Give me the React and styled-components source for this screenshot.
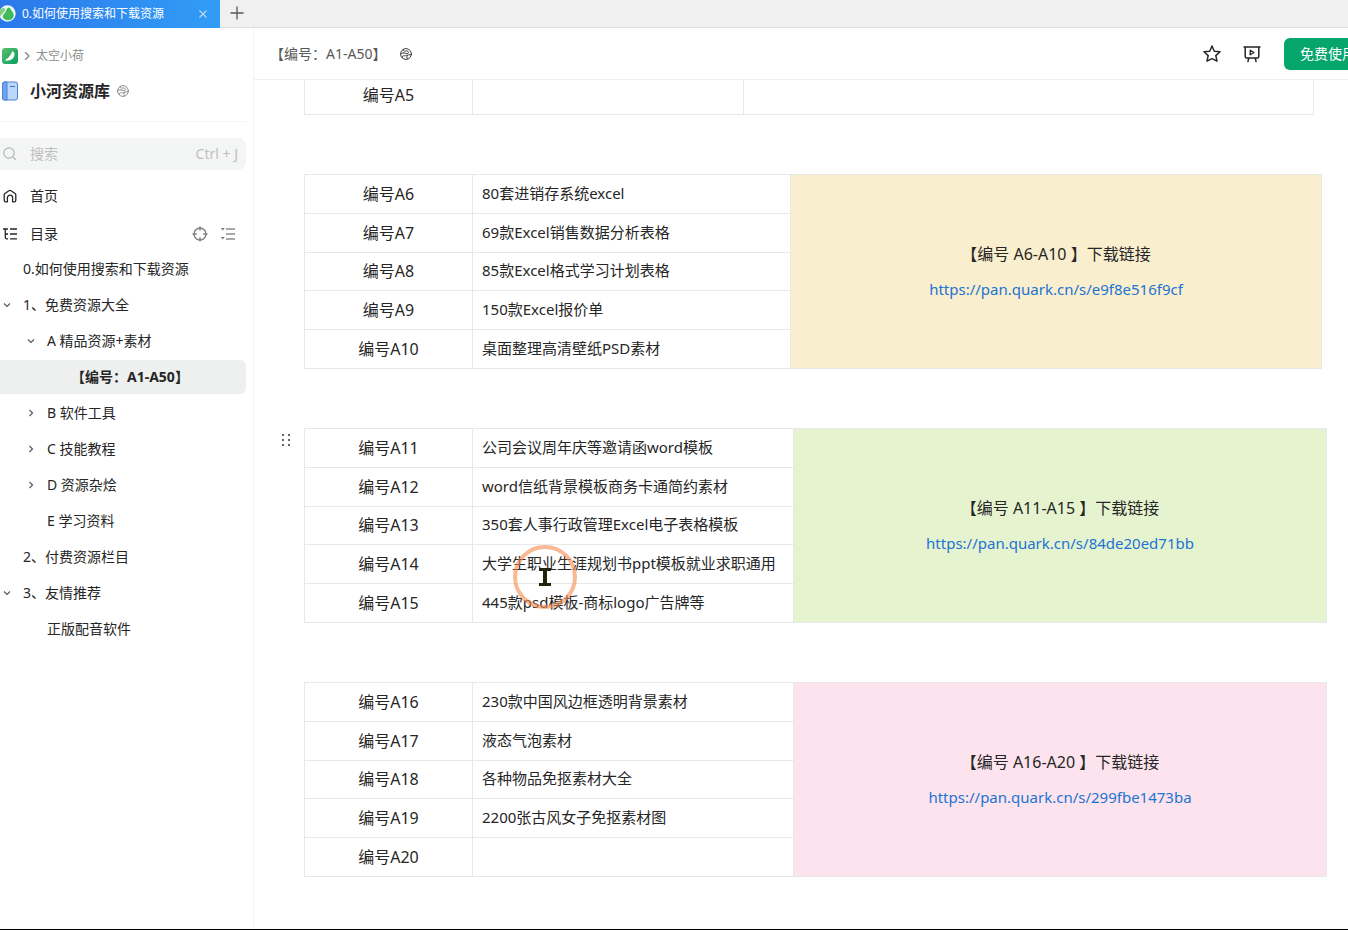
import React from "react";
import styled, { createGlobalStyle } from "styled-components";

const GlobalStyle = createGlobalStyle`
  * { box-sizing: border-box; }
  body {
    margin: 0;
    background: #fff;
    color: #262626;
    font-family: "Noto Sans", "Noto Sans CJK SC", sans-serif;
    font-size: 14px;
    line-height: 20px;
  }
  a { color: inherit; text-decoration: none; }
  ul { list-style: none; margin: 0; padding: 0; }
  button { font: inherit; color: inherit; border: 0; padding: 0; background: none; cursor: pointer; }
  svg { display: block; flex: none; }
`;

const Page = styled.div`
  display: flex;
  flex-direction: column;
  min-height: 100vh;
  overflow: hidden;
  border-bottom: 1px solid #000;
`;

const TabBar = styled.div`
  display: flex;
  height: 28px;
  background: #f0f0f0;
  border-bottom: 1px solid #e2e2e2;
`;

const BrowserTab = styled.div`
  display: flex;
  align-items: center;
  gap: 6px;
  width: 220px;
  height: 28px;
  padding-right: 12px;
  background: linear-gradient(90deg, #2b78ea, #319df6);
  color: #fff;
  font-size: 12px;
`;

const TabTitle = styled.span`
  flex: 1;
  white-space: nowrap;
`;

const NewTab = styled.button`
  display: flex;
  align-items: center;
  justify-content: center;
  width: 33px;
  height: 26px;
`;

const Body = styled.div`
  display: flex;
  flex: 1;
`;

const Sidebar = styled.aside`
  flex: none;
  width: 254px;
  padding-right: 7px;
  border-right: 1px solid #f3f4f4;
`;

const Crumbs = styled.div`
  display: flex;
  align-items: center;
  gap: 4px;
  height: 20px;
  margin-top: 18px;
  padding-left: 2px;
  color: #8a8f8d;
  font-size: 12px;
`;

const BookTitle = styled.div`
  display: flex;
  align-items: center;
  height: 24px;
  margin-top: 13px;
  padding-left: 2px;
`;

const BookName = styled.h1`
  margin: 0 7px 0 12px;
  font-size: 16px;
  line-height: 24px;
  font-weight: 700;
`;

const Divider = styled.hr`
  height: 1px;
  margin: 18px 0 16px;
  border: 0;
  background: #f3f4f4;
`;

const SearchBox = styled.label`
  display: flex;
  align-items: center;
  height: 32px;
  padding: 0 8px 0 2px;
  border-radius: 0 8px 8px 0;
  background: #f4f5f5;
  color: #bec0bf;
`;

const SearchInput = styled.input`
  flex: 1;
  min-width: 0;
  padding: 0;
  margin-left: 12px;
  border: 0;
  outline: 0;
  background: none;
  font: inherit;
  &::placeholder { color: #bec0bf; opacity: 1; }
`;

const Shortcut = styled.span`
  font-size: 14px;
`;

const NavRow = styled.div`
  display: flex;
  align-items: center;
  gap: 12px;
  height: 38px;
  padding: 0 10px 0 2px;
  a { flex: 1; display: flex; align-items: center; gap: 12px; }
`;

const NavList = styled.nav`
  padding-top: 7px;
`;

const Tree = styled.ul`
  display: flex;
  flex-direction: column;
  gap: 2px;
  margin-top: -1px;
`;

const TreeItem = styled.li`
  display: flex;
  align-items: center;
  height: 34px;
  padding-left: ${(p) => p.$level * 24}px;
  border-radius: 0 6px 6px 0;
  background: ${(p) => (p.$active ? "#eeefef" : "transparent")};
  font-weight: ${(p) => (p.$active ? 700 : 400)};
`;

const Toggle = styled.span`
  display: flex;
  justify-content: center;
  width: 14px;
  margin-right: 9px;
`;

const Main = styled.main`
  flex: 1;
  min-width: 0;
`;

const Header = styled.header`
  display: flex;
  align-items: center;
  gap: 14px;
  height: 52px;
  padding-left: 16px;
  border-bottom: 1px solid #f0f1f1;
  overflow: hidden;
  color: #585a5a;
`;

const Actions = styled.div`
  display: flex;
  align-items: center;
  gap: 20px;
  margin: 0 -24px 0 auto;
  color: #262626;
`;

const FreeButton = styled.button`
  width: 88px;
  height: 32px;
  margin-left: 2px;
  border-radius: 6px;
  background: #06a56b;
  color: #fff;
  white-space: nowrap;
`;

const Doc = styled.article`
  overflow: hidden;
  padding: 0 21px 52px 50px;
`;

const Block = styled.section`
  position: relative;
  margin-top: ${(p) => (p.$scrolled ? -5 : 59)}px;
  margin-right: ${(p) => p.$inset || 0}px;
`;

const Handle = styled.button`
  position: absolute;
  left: -23px;
  top: 5px;
`;

const Table = styled.table`
  width: 100%;
  height: ${(p) => p.$height}px;
  border-collapse: collapse;
  table-layout: fixed;
`;

const Cell = styled.td`
  padding: 0 9px 2px;
  border: 1px solid #e7e9e8;
  font-size: 15px;
  line-height: 18px;
  white-space: nowrap;
`;

const CodeCell = styled(Cell)`
  padding-bottom: 0;
  font-size: 16px;
  line-height: 24px;
  text-align: center;
`;

const LinkCell = styled(Cell)`
  padding-bottom: 0;
  background: ${(p) => p.$color};
  font-size: 16px;
  line-height: 35px;
  text-align: center;
  p { margin: 0; }
  a { color: #1c74d3; font-size: 15px; }
`;

const Pointer = styled.div`
  position: absolute;
  left: 208px;
  top: 116px;
  pointer-events: none;
`;

const Globe = ({ color }) => (
  <svg width="12" height="12" viewBox="0 0 12 12" fill="none" stroke={color} strokeWidth="1" strokeLinecap="round">
    <circle cx="6" cy="6" r="5.4" />
    <path d="M.8 6.200C1.500 5 2.600 4.600 3.800 4.900" />
    <path d="M3.200 1.500C3.300 3 4 3.300 5.200 3.100c1.500-.3 2.900-.2 3.200 1C8.700 5.500 7.300 6 6.200 5.600 5.200 5.300 4.500 4.800 3.800 4.900" />
    <path d="M11.200 6.600C9.500 6.500 8 7 6.500 7.500 5 8 3.600 7.400 2.600 8.200c-.4.400-.4.800-.4 1.300" />
    <path d="M7.200 7.500c-.6.900-.5 2.300.3 3.600" />
  </svg>
);

const Chevron = ({ open, size = 8, color = "#585a5a" }) => (
  <svg width={size} height={size} viewBox="0 0 8 8" fill="none" stroke={color} strokeWidth="1.2">
    <path d={open ? "M1 2.500L4 5.500 7 2.500" : "M2.500 1L5.500 4 2.500 7"} />
  </svg>
);

const TabLogo = () => (
  <svg width="16" height="18" viewBox="0 0 16 18">
    <circle cx="7.500" cy="8.500" r="8.200" fill="#e9f8ee" />
    <path d="M8.500 2.500c2.500.3 2 2.200 3.500 3.700 2.300 2.200 2.300 6.300-.5 8.100-3 1.800-7 .9-8.300-1.600C2 10.300 4 9.500 5.200 7.500 6.200 5.700 6.300 3.800 8.500 2.500z" fill="#43b75c" />
    <path d="M0 5.500C2 2.500 5 2.500 5 4.500 5 7.500 1.500 8.500 0 12z" fill="#7fd07c" />
  </svg>
);

const BrandLogo = () => (
  <svg width="16" height="16" viewBox="0 0 16 16">
    <defs>
      <linearGradient id="brand" x1="0" y1="0" x2="1" y2="1">
        <stop offset="0" stopColor="#58c06a" />
        <stop offset="1" stopColor="#0a9d62" />
      </linearGradient>
    </defs>
    <rect width="16" height="16" rx="3" fill="url(#brand)" />
    <path d="M10.200 3.200c1.500.3 1.200 1.300 2.200 1.800C13 9.500 10 13.200 3.200 12.600c.5-1.500 1.600-1.800 3.200-3.200C8.500 7.500 9.300 5.500 10.200 3.200z" fill="#fff" />
  </svg>
);

const BookIcon = () => (
  <svg width="16" height="20" viewBox="0 0 16 20">
    <rect x=".5" y="1" width="15" height="18" rx="2" fill="#bad7fb" stroke="#4c82d4" />
    <path d="M2.500 1H5v18H2.500a2 2 0 0 1-2-2V3a2 2 0 0 1 2-2z" fill="#6ba2f4" stroke="#4c82d4" />
    <path d="M8 5.500h5" stroke="#3d6fc0" />
  </svg>
);

const SearchIcon = () => (
  <svg width="16" height="16" viewBox="0 0 16 16" fill="none" stroke="#b4b7b6" strokeWidth="1.200">
    <circle cx="7" cy="7" r="5.200" />
    <path d="M11 11L14 14" />
  </svg>
);

const HomeIcon = () => (
  <svg width="16" height="16" viewBox="0 0 16 16" fill="none" stroke="#262626" strokeWidth="1.300" strokeLinejoin="round">
    <path d="M2.200 6.900c0-.6.200-1 .7-1.400l4-2.700c.7-.5 1.500-.5 2.200 0l4 2.700c.5.4.7.8.7 1.400v5.300c0 1-.6 1.600-1.600 1.600h-1.600V9.800a2.600 2.600 0 0 0-5.200 0v4H3.800c-1 0-1.600-.6-1.600-1.600z" />
  </svg>
);

const CatalogIcon = () => (
  <svg width="16" height="16" viewBox="0 0 16 16" fill="none" stroke="#262626" strokeWidth="1.300">
    <path d="M1 3h5M3.300 3v8.200c0 1 .5 1.600 1.500 1.600H6M3.300 8H6M8 3h7M8 8h7M8 12.800h7" />
  </svg>
);

const TargetIcon = () => (
  <svg width="16" height="16" viewBox="0 0 16 16" fill="none" stroke="#7c7f7e" strokeWidth="1.300">
    <circle cx="8" cy="8" r="6" />
    <path d="M8 .5v4.300M8 11.200v4.300M.5 8h4.300M11.200 8h4.300" />
  </svg>
);

const CollapseIcon = () => (
  <svg width="16" height="16" viewBox="0 0 16 16" fill="none" stroke="#8a8f8d" strokeWidth="1.300">
    <path d="M6 3H15M6 8H15M6 13H15" />
    <path d="M.8 2h4L2.800 4.400zM.8 11h4L2.800 13.400z" fill="#7c7f7e" stroke="none" />
  </svg>
);

const StarIcon = () => (
  <svg width="20" height="20" viewBox="0 0 20 20" fill="none" stroke="#262626" strokeWidth="1.500" strokeLinejoin="round">
    <path d="M10 2l2.300 5.200 5.700.6-4.200 3.800 1.200 5.600L10 14.700l-5 2.500 1.200-5.600L2 7.800l5.700-.6z" />
  </svg>
);

const PresentIcon = () => (
  <svg width="20" height="20" viewBox="0 0 20 20" fill="none" stroke="#262626" strokeWidth="1.500">
    <path d="M1.500 3h17M3.200 3v9.500c0 1 .5 1.500 1.500 1.500h10.600c1 0 1.500-.5 1.500-1.500V3M6.800 14l-1 4M13.200 14l1 4" />
    <path d="M8.200 6.200L12 8.500l-3.800 2.300z" strokeWidth="1.300" strokeLinejoin="round" />
  </svg>
);

const DragIcon = () => (
  <svg width="10" height="14" viewBox="0 0 10 14" fill="#404040">
    {[2, 7, 12].map((y) => (
      <React.Fragment key={y}>
        <circle cx="2" cy={y} r="1.100" />
        <circle cx="8" cy={y} r="1.100" />
      </React.Fragment>
    ))}
  </svg>
);

const IBeam = () => (
  <svg width="66" height="66" viewBox="0 0 66 66" fill="none">
    <circle cx="33" cy="33" r="30" stroke="#f58b4c" strokeOpacity=".6" strokeWidth="4" />
    <path d="M27 24h12v3h-4v12h4v3H27v-3h4V27h-4z" fill="#22240c" />
  </svg>
);

const tree = [
  { level: 0, text: "0.如何使用搜索和下载资源" },
  { level: 0, text: "1、免费资源大全", state: "open" },
  { level: 1, text: "A 精品资源+素材", state: "open" },
  { level: 2, text: "【编号：A1-A50】", active: true },
  { level: 1, text: "B 软件工具", state: "closed" },
  { level: 1, text: "C 技能教程", state: "closed" },
  { level: 1, text: "D 资源杂烩", state: "closed" },
  { level: 1, text: "E 学习资料" },
  { level: 0, text: "2、付费资源栏目" },
  { level: 0, text: "3、友情推荐", state: "open" },
  { level: 1, text: "正版配音软件" },
];

const groups = [
  {
    range: "A6-A10", first: 6, width: 318, inset: 5, color: "#f9eecd",
    url: "https://pan.quark.cn/s/e9f8e516f9cf",
    rows: ["80套进销存系统excel", "69款Excel销售数据分析表格", "85款Excel格式学习计划表格", "150款Excel报价单", "桌面整理高清壁纸PSD素材"],
  },
  {
    range: "A11-A15", first: 11, width: 321, color: "#e6f3cf", handle: true,
    url: "https://pan.quark.cn/s/84de20ed71bb",
    rows: ["公司会议周年庆等邀请函word模板", "word信纸背景模板商务卡通简约素材", "350套人事行政管理Excel电子表格模板", "大学生职业生涯规划书ppt模板就业求职通用", "445款psd模板-商标logo广告牌等"],
  },
  {
    range: "A16-A20", first: 16, width: 321, color: "#fce3ed",
    url: "https://pan.quark.cn/s/299fbe1473ba",
    rows: ["230款中国风边框透明背景素材", "液态气泡素材", "各种物品免抠素材大全", "2200张古风女子免抠素材图", ""],
  },
];

const Columns = ({ second }) => (
  <colgroup>
    <col width="168" />
    <col width={second} />
    <col />
  </colgroup>
);

const ResourceTable = ({ group }) => (
  <Block $inset={group.inset}>
    {group.handle && <Handle aria-label="拖动"><DragIcon /></Handle>}
    <Table $height={195}>
      <Columns second={group.width} />
      <tbody>
        {group.rows.map((name, i) => (
          <tr key={i}>
            <CodeCell>编号A{group.first + i}</CodeCell>
            <Cell>{name}</Cell>
            {i === 0 && (
              <LinkCell rowSpan={5} $color={group.color}>
                <p>【编号 {group.range} 】下载链接</p>
                <p><a href={group.url}>{group.url}</a></p>
              </LinkCell>
            )}
          </tr>
        ))}
      </tbody>
    </Table>
    {group.handle && <Pointer><IBeam /></Pointer>}
  </Block>
);

export default function App() {
  return (
    <Page>
      <GlobalStyle />
      <TabBar>
        <BrowserTab>
          <TabLogo />
          <TabTitle>0.如何使用搜索和下载资源</TabTitle>
          <button aria-label="关闭标签页">
            <svg width="10" height="10" viewBox="0 0 10 10" stroke="#b9d8fb" strokeWidth="1.200">
              <path d="M1.500 1.500l7 7M8.500 1.500l-7 7" />
            </svg>
          </button>
        </BrowserTab>
        <NewTab aria-label="新建标签页">
          <svg width="14" height="14" viewBox="0 0 14 14" stroke="#555" strokeWidth="1.300">
            <path d="M7 .5v13M.5 7h13" />
          </svg>
        </NewTab>
      </TabBar>
      <Body>
        <Sidebar>
          <Crumbs>
            <BrandLogo />
            <Chevron size={10} color="#8a8f8d" />
            <a href="#space">太空小荷</a>
          </Crumbs>
          <BookTitle>
            <BookIcon />
            <BookName>小河资源库</BookName>
            <Globe color="#8a8f8d" />
          </BookTitle>
          <Divider />
          <SearchBox>
            <SearchIcon />
            <SearchInput type="text" placeholder="搜索" aria-label="搜索" />
            <Shortcut>Ctrl + J</Shortcut>
          </SearchBox>
          <NavList>
            <NavRow>
              <a href="#home"><HomeIcon />首页</a>
            </NavRow>
            <NavRow>
              <a href="#catalog"><CatalogIcon />目录</a>
              <button aria-label="定位"><TargetIcon /></button>
              <button aria-label="折叠"><CollapseIcon /></button>
            </NavRow>
            <Tree>
              {tree.map((item) => (
                <TreeItem key={item.text} $level={item.level} $active={item.active}>
                  <Toggle>{item.state && <Chevron open={item.state === "open"} />}</Toggle>
                  <a href="#doc">{item.text}</a>
                </TreeItem>
              ))}
            </Tree>
          </NavList>
        </Sidebar>
        <Main>
          <Header>
            <span>【编号：A1-A50】</span>
            <Globe color="#404040" />
            <Actions>
              <button aria-label="收藏"><StarIcon /></button>
              <button aria-label="演示"><PresentIcon /></button>
              <FreeButton>免费使用</FreeButton>
            </Actions>
          </Header>
          <Doc>
            <Block $scrolled $inset={13}>
              <Table $height={40}>
                <Columns second={271} />
                <tbody>
                  <tr>
                    <CodeCell>编号A5</CodeCell>
                    <Cell />
                    <Cell />
                  </tr>
                </tbody>
              </Table>
            </Block>
            {groups.map((group) => (
              <ResourceTable key={group.range} group={group} />
            ))}
          </Doc>
        </Main>
      </Body>
    </Page>
  );
}
